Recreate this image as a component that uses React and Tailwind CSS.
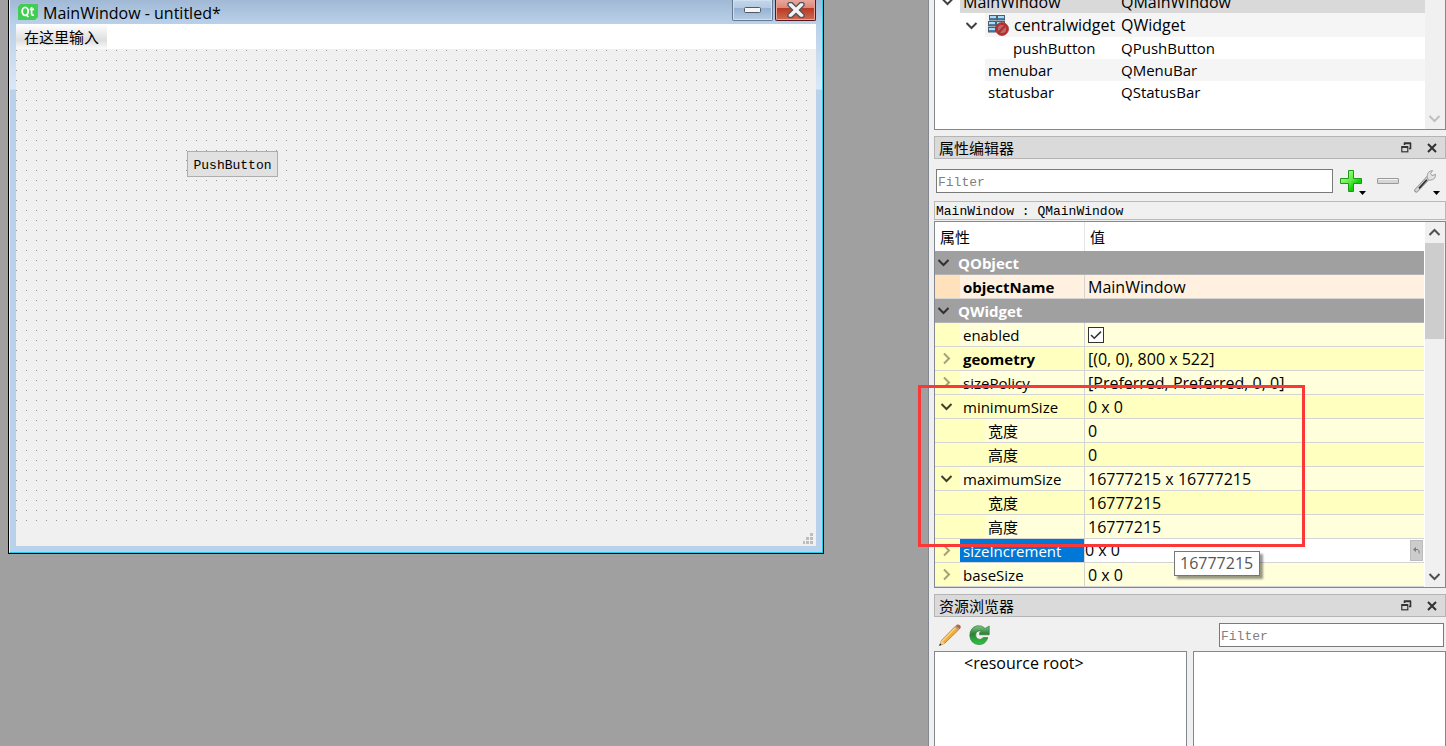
import React from 'react';

function Chevron({ dir = 'down', className = 'text-[#404040]', size = 13 }) {
  const d = {
    down: 'M1.5 4 L6.5 9 L11.5 4',
    up: 'M1.5 9 L6.5 4 L11.5 9',
    right: 'M4 1.5 L9 6.5 L4 11.5',
  }[dir];
  return (
    <svg width={size} height={size} viewBox="0 0 13 13" className={className} aria-hidden="true">
      <path d={d} fill="none" stroke="currentColor" strokeWidth="2" />
    </svg>
  );
}

function QtLogo() {
  return (
    <svg width="20" height="16" viewBox="0 0 20 16" aria-hidden="true">
      <path d="M2.5 0H20V13L17 16H0V2.5Z" fill="#41cd52" />
      <ellipse cx="7.2" cy="7.3" rx="3" ry="4" fill="none" stroke="#fff" strokeWidth="1.8" />
      <path d="M8 10.5L10.3 13" stroke="#fff" strokeWidth="1.8" />
      <path d="M13.6 3V9.8Q13.6 11.4 16 11M11.8 5.4H16" fill="none" stroke="#fff" strokeWidth="1.7" />
    </svg>
  );
}

function NoLayoutIcon() {
  return (
    <svg width="21" height="21" viewBox="0 0 21 21" aria-hidden="true">
      <g fill="#4f7fa6" stroke="#4d6072" strokeWidth="1">
        <rect x="1.5" y="0.5" width="7" height="4.5" />
        <rect x="9.5" y="0.5" width="7" height="4.5" />
        <rect x="0.5" y="6.5" width="7" height="4.5" />
        <rect x="8.5" y="6.5" width="8" height="4.5" />
        <rect x="0.5" y="12.5" width="7" height="4.5" />
      </g>
      <path d="M2 2H8M10 2H16M1 8H7M9 8H16M1 14H7" stroke="#a9dcf6" strokeWidth="2" />
      <circle cx="14" cy="14" r="5.3" fill="#a77474" stroke="#c02c2c" strokeWidth="2.4" />
      <path d="M10.4 17.6L17.6 10.4" stroke="#c42a2a" strokeWidth="2.4" />
      <circle cx="14" cy="14" r="6.5" fill="none" stroke="#8f3030" strokeWidth="0.7" />
    </svg>
  );
}

function PlusIcon() {
  return (
    <svg width="28" height="26" viewBox="0 0 28 26" aria-hidden="true">
      <defs>
        <linearGradient id="plusFill" x1="0" y1="0" x2="1" y2="1">
          <stop offset="0" stopColor="#d4fcc4" />
          <stop offset="0.5" stopColor="#5aea42" />
          <stop offset="0.7" stopColor="#12d008" />
          <stop offset="1" stopColor="#12c408" />
        </linearGradient>
      </defs>
      <path d="M8.5 0.5H13.5V8.5H21.5V13.5H13.5V21.5H8.5V13.5H0.5V8.5H8.5Z" fill="url(#plusFill)" stroke="#1c9a14" />
      <path d="M19 21H26L22.5 25Z" fill="#000" />
    </svg>
  );
}

function MinusIcon() {
  return (
    <svg width="22" height="6" viewBox="0 0 22 6" aria-hidden="true">
      <rect x="0.5" y="0.5" width="21" height="5" rx="0.5" fill="#d6d6d6" stroke="#999" />
      <path d="M1.5 1.5H20.5" stroke="#f4f4f4" />
    </svg>
  );
}

function WrenchIcon() {
  return (
    <svg width="28" height="26" viewBox="0 0 28 26" aria-hidden="true">
      <path d="M2.4 20.4L14 8" stroke="#8a8a8a" strokeWidth="4.2" strokeLinecap="round" />
      <path d="M2.5 20.2L14 8" stroke="#d2d2d2" strokeWidth="2.8" strokeLinecap="round" />
      <path d="M5 18.4L12.8 9.8" stroke="#303030" strokeWidth="1.7" />
      <path
        d="M13.2 6.8Q13 1 18.6 0.6L16.6 3.4L18 5.6L21.4 4.4Q22 9.8 16 10.2L14 9.6Z"
        fill="#e2e2e2"
        stroke="#979797"
        strokeWidth="0.9"
      />
      <path d="M19 21H26L22.5 25Z" fill="#000" />
    </svg>
  );
}

function PencilIcon() {
  return (
    <svg width="22" height="22" viewBox="0 0 22 22" aria-hidden="true">
      <path d="M0.5 21.5L2.6 16.3L16 2.6L19.6 5.8L5.6 19.4Z" fill="#f0ac3c" stroke="#b9781c" strokeWidth="0.8" />
      <path d="M3.4 17L16.6 3.6" stroke="#fbd98a" strokeWidth="1.3" />
      <path d="M0.5 21.5L2.6 16.3L5.6 19.4Z" fill="#ecd0a0" />
      <path d="M0.2 21.8L1.2 19.4L2.6 20.8Z" fill="#222" />
      <path d="M15.6 3L17 1.6L20.8 5L19.4 6.2Z" fill="#a9a49c" />
      <path d="M16.8 1.8Q18.6 -0.6 20.9 1.2Q22.8 3 20.6 5.2Z" fill="#c0603c" />
    </svg>
  );
}

function ReloadIcon() {
  return (
    <svg width="21" height="20" viewBox="0 0 21 20" aria-hidden="true">
      <defs>
        <linearGradient id="reloadFill" gradientUnits="userSpaceOnUse" x1="0" y1="0" x2="0" y2="20">
          <stop offset="0" stopColor="#8cc88c" />
          <stop offset="0.45" stopColor="#2b8238" />
          <stop offset="1" stopColor="#2ecb3c" />
        </linearGradient>
      </defs>
      <path
        d="M16.2 3.4L20.2 1V9.8H10.6V7.6L12.6 6.4Q8.6 5 7 8Q5.8 11.6 8.4 13.8Q11.6 15.6 14.4 12.6H18.8Q17 19.4 10 19.6Q1.6 19 0.8 10.8Q1 2.4 8 0.8Q13 0 16.2 3.4Z"
        fill="url(#reloadFill)"
        stroke="#2d7c38"
        strokeWidth="0.7"
      />
    </svg>
  );
}

function DockTitle({ children }) {
  return (
    <div className="flex h-[23px] shrink-0 items-center border border-[#b4b4b4] bg-[#dadada] pl-1">
      <h2 className="flex-1 text-[15px] leading-5">{children}</h2>
      <button aria-label="Float" className="mr-[15px] block">
        <svg width="11" height="11" viewBox="0 0 11 11" aria-hidden="true">
          <path d="M3.5 3V1.5H9.5V6.5H8M3 1H10" fill="none" stroke="#333" strokeWidth="1.6" />
          <rect x="0.8" y="4.8" width="6" height="5" fill="#dadada" stroke="#333" strokeWidth="1.2" />
          <path d="M0.5 5H7" stroke="#333" strokeWidth="2" />
        </svg>
      </button>
      <button aria-label="Close" className="mr-2 block">
        <svg width="10" height="10" viewBox="0 0 10 10" aria-hidden="true">
          <path d="M1 1L9 9M9 1L1 9" stroke="#303030" strokeWidth="2" />
        </svg>
      </button>
    </div>
  );
}

function FormWindow() {
  return (
    <section className="h-[554px] w-[816px] shrink-0 border-r border-b border-l border-black">
      <div className="flex h-full flex-col border-r border-b border-l border-r-[#22cfe8] border-b-[#22cfe8] border-l-[#e8f2fb] bg-[linear-gradient(#a1b9d4_0px,#b9d1ea_24px,#dbe7f6_89px,#b9d1ea_90px)] pr-1.5 pb-1.5 pl-1.5">
        <header className="flex h-6 shrink-0 items-start pl-0.5">
          <span className="mt-1">
            <QtLogo />
          </span>
          <h1 className="mt-0.5 ml-[5px] flex-1 text-base leading-[22px]">MainWindow - untitled*</h1>
          <button
            aria-label="Minimize"
            className="mr-0.5 flex h-[21px] w-[41px] items-center justify-center rounded-b-xs border border-t-0 border-[#66788d] bg-[linear-gradient(#c3d6eb_0%,#b4cbe3_38%,#96b1cf_42%,#b5cde6_100%)] shadow-[inset_0_0_0_1px_#cfe0f2]"
          >
            <svg width="17" height="6" viewBox="0 0 17 6" aria-hidden="true">
              <rect x="0.5" y="0.5" width="16" height="5" rx="1" fill="#f5f5f5" stroke="#4f5a68" />
            </svg>
          </button>
          <button
            aria-label="Close"
            className="flex h-[21px] w-[41px] items-center justify-center rounded-b-xs border border-t-0 border-[#551820] bg-[linear-gradient(#e9a89c_0%,#dd8878_38%,#b93a22_42%,#cf6a50_100%)] shadow-[inset_0_0_0_1px_#e8a498]"
          >
            <svg width="18" height="16" viewBox="0 0 18 16" aria-hidden="true">
              <path
                d="M1 1.5L2 0.7H5L9 4.6L13 0.7H16L17 1.5V3.5L12.4 8L17 12.5V14.5L16 15.3H13L9 11.4L5 15.3H2L1 14.5V12.5L5.6 8L1 3.5Z"
                fill="#f4f4f4"
                stroke="#50525f"
                strokeWidth="1.3"
              />
            </svg>
          </button>
        </header>
        <nav className="flex h-[25px] shrink-0 bg-white">
          <button className="bg-[linear-gradient(#ffffff,#dedede_65%,#fafafa)] px-2 text-[15px] leading-[26px]">在这里输入</button>
        </nav>
        <div className="flex flex-1 flex-col bg-[#f0f0f0]">
          <div className="h-[476px] bg-[linear-gradient(#f0f0f0_1px,transparent_1px,transparent_2px,#f0f0f0_2px),linear-gradient(90deg,#959595_1px,transparent_1px)] bg-size-[10px_10px] pt-[102px] pl-[171px]">
            <button className="block h-[26px] w-[91px] border border-[#adadad] bg-[#e1e1e1] font-['Liberation_Mono',monospace] text-[13px] leading-[27px]">
              PushButton
            </button>
          </div>
          <footer className="flex flex-1 items-end justify-end pr-[3px] pb-0.5">
            <svg width="10" height="11" viewBox="0 0 10 11" aria-hidden="true">
              <path d="M7 0h3v3h-3zM3 4h3v3h-3zM7 4h3v3h-3zM0 8h2v3h-2zM3 8h3v3h-3zM7 8h3v3h-3z" fill="#bdbdbd" />
            </svg>
          </footer>
        </div>
      </div>
    </section>
  );
}

function ObjectTree() {
  return (
    <section className="flex h-[130px] shrink-0 border-r border-b border-l border-[#828790] bg-white">
      <div className="flex-1">
        <div className="flex h-[13px] items-end overflow-hidden">
          <span className="flex h-6 w-[25px] shrink-0 items-center justify-center">
            <Chevron />
          </span>
          <div className="flex h-6 flex-1 bg-[#d9d9d9] text-base">
            <span className="w-[161px] pl-[3px] leading-[26px]">MainWindow</span>
            <span className="leading-[26px]">QMainWindow</span>
          </div>
        </div>
        <div className="flex h-6 text-base">
          <span className="flex w-[50px] shrink-0 items-center justify-end pr-[7px]">
            <Chevron />
          </span>
          <div className="flex flex-1 bg-[#f5f5f5]">
            <span className="flex w-[136px] items-center gap-[5px] pl-[3px]">
              <NoLayoutIcon />
              <span>centralwidget</span>
            </span>
            <span className="leading-6">QWidget</span>
          </div>
        </div>
        <div className="flex h-[22px]">
          <span className="w-[186px] pl-[78px] leading-[22px]">pushButton</span>
          <span className="leading-[22px]">QPushButton</span>
        </div>
        <div className="flex h-[22px] pl-[50px]">
          <div className="flex flex-1 bg-[#f5f5f5]">
            <span className="w-[136px] pl-[3px] leading-[22px]">menubar</span>
            <span className="leading-[22px]">QMenuBar</span>
          </div>
        </div>
        <div className="flex h-[22px]">
          <span className="w-[186px] pl-[53px] leading-[22px]">statusbar</span>
          <span className="leading-[22px]">QStatusBar</span>
        </div>
      </div>
      <div className="flex w-5 shrink-0 items-end bg-[#f0f0f0] pb-1 pl-[3px]">
        <Chevron className="text-[#bfbfbf]" />
      </div>
    </section>
  );
}

const rows = [
  { name: 'QObject', group: true },
  { name: 'objectName', value: 'MainWindow', bold: true, tone: 'peach' },
  { name: 'QWidget', group: true },
  { name: 'enabled', check: true, tone: 'light' },
  { name: 'geometry', value: '[(0, 0), 800 x 522]', bold: true, arrow: 'right', tone: 'dark' },
  { name: 'sizePolicy', value: '[Preferred, Preferred, 0, 0]', arrow: 'right', tone: 'light' },
  { name: 'minimumSize', value: '0 x 0', arrow: 'down', tone: 'dark' },
  { name: '宽度', value: '0', child: true, tone: 'light' },
  { name: '高度', value: '0', child: true, tone: 'dark' },
  { name: 'maximumSize', value: '16777215 x 16777215', arrow: 'down', tone: 'light' },
  { name: '宽度', value: '16777215', child: true, tone: 'dark' },
  { name: '高度', value: '16777215', child: true, tone: 'light' },
  { name: 'sizeIncrement', value: '0 x 0', arrow: 'right', selected: true, tone: 'white' },
  { name: 'baseSize', value: '0 x 0', arrow: 'right', tone: 'light' },
];

const tones = {
  peach: 'bg-[#fff0df]',
  light: 'bg-[#ffffdc]',
  dark: 'bg-[#ffffbf]',
  white: 'bg-white',
};

function PropertyRow({ row }) {
  if (row.group) {
    return (
      <tr className="h-6 bg-[#a0a0a0] text-white">
        <th colSpan={3} className="border-b border-[#b4b4b4] p-0 text-left font-bold">
          <div className="flex h-[23px] items-start">
            <span className="w-[23px] pt-[5px] pl-0.5">
              <Chevron className="text-[#303030]" />
            </span>
            <span className="leading-[25px]">{row.name}</span>
          </div>
        </th>
      </tr>
    );
  }
  const indent = row.tone === 'peach' ? 'bg-[#ffe1bc]' : 'bg-[#ffffbf]';
  return (
    <tr className={`h-6 ${tones[row.tone]}`}>
      <td className={`border-b border-[#d4d4d4] p-0 ${indent}`}>
        {row.arrow && (
          <div className="pl-[5px]">
            <Chevron dir={row.arrow} className={row.arrow === 'right' ? 'text-[#a2a27a]' : 'text-[#404030]'} />
          </div>
        )}
      </td>
      <td className="border-r border-b border-[#d4d4d4] p-0">
        <div
          className={
            row.selected
              ? 'h-[23px] bg-[#0078d7] pl-[3px] leading-[25px] text-white'
              : row.bold
                ? 'h-[23px] pl-[3px] leading-[25px] font-bold'
                : row.child
                  ? 'flex h-[23px] leading-[25px]'
                  : 'h-[23px] pl-[3px] leading-[25px]'
          }
        >
          {row.child && <span className="mr-[3px] w-[25px] bg-[#ffffbf]" />}
          {row.name}
        </div>
      </td>
      <td className="border-b border-[#d4d4d4] p-0 text-base">
        {row.check ? (
          <label className="relative flex h-[23px] items-center pl-[3px]">
            <input
              type="checkbox"
              defaultChecked
              aria-label="enabled"
              className="peer h-4 w-4 appearance-none border border-[#333] bg-white"
            />
            <svg
              width="16"
              height="16"
              viewBox="0 0 16 16"
              aria-hidden="true"
              className="pointer-events-none absolute left-[3px] hidden peer-checked:block"
            >
              <path d="M3 8L6.3 11.3L13 4.6" fill="none" stroke="#333" strokeWidth="1.5" />
            </svg>
          </label>
        ) : row.selected ? (
          <div className="flex h-[23px] items-center justify-between">
            <span className="leading-[23px]">{row.value}</span>
            <button
              aria-label="Reset"
              className="mr-px flex h-[21px] w-[13px] items-center justify-center border border-[#bcbcbc] bg-[#cccccc]"
            >
              <svg width="7" height="7" viewBox="0 0 7 7" aria-hidden="true">
                <path d="M3 0V5L0 2.5Z" fill="#7c7c7c" />
                <path d="M2.5 2.5H5Q6.2 3 6.2 6.5" fill="none" stroke="#7c7c7c" />
              </svg>
            </button>
          </div>
        ) : (
          <div className="h-[23px] pl-[3px] leading-[25px]">{row.value}</div>
        )}
      </td>
    </tr>
  );
}

function PropertyEditor() {
  return (
    <>
      <div className="mt-1.5">
        <DockTitle>属性编辑器</DockTitle>
      </div>
      <div className="flex h-[42px] shrink-0 items-center pt-0.5 pl-0.5">
        <input
          aria-label="Filter properties"
          placeholder="Filter"
          className="h-6 min-w-0 flex-1 border border-[#7a7a7a] bg-white pt-0.5 pl-px font-['Liberation_Mono',monospace] text-[13px] placeholder:text-[#808080]"
        />
        <button aria-label="Add property" className="ml-[7px] block pt-1">
          <PlusIcon />
        </button>
        <button aria-label="Remove property" className="ml-[9px] block">
          <MinusIcon />
        </button>
        <button aria-label="Configure" className="mr-1 ml-[15px] block pt-1">
          <WrenchIcon />
        </button>
      </div>
      <p className="h-[19px] shrink-0 border border-[#b9b9b9] pl-px font-['Liberation_Mono',monospace] text-[13px] leading-5">
        MainWindow : QMainWindow
      </p>
      <div className="relative mt-px flex h-[367px] shrink-0 border border-[#828790] bg-white">
        <div className="flex-1">
          <table className="w-full table-fixed border-separate border-spacing-0">
            <colgroup>
              <col className="w-[25px]" />
              <col className="w-[125px]" />
              <col />
            </colgroup>
            <thead>
              <tr className="h-[29px]">
                <th colSpan={2} className="border-r border-[#e5e5e5] p-0 text-left font-normal">
                  <div className="h-[29px] pl-[5px] leading-[31px]">属性</div>
                </th>
                <th className="p-0 text-left font-normal">
                  <div className="h-[29px] pl-[5px] leading-[31px]">值</div>
                </th>
              </tr>
            </thead>
            <tbody>
              {rows.map((row, i) => (
                <PropertyRow key={i} row={row} />
              ))}
            </tbody>
          </table>
        </div>
        <div className="ml-px flex w-5 shrink-0 flex-col bg-[#f0f0f0]">
          <span className="flex h-[21px] items-center pl-[3px]">
            <Chevron dir="up" className="text-[#505050]" />
          </span>
          <span className="h-24 w-[19px] bg-[#cdcdcd]" />
          <span className="mt-auto flex h-[21px] items-center pl-[3px]">
            <Chevron className="text-[#505050]" />
          </span>
        </div>
        <div className="pointer-events-none absolute top-[163px] -left-[17px] h-[162px] w-[387px] border-3 border-[#fb3838]" />
        <div
          role="tooltip"
          className="absolute top-[329px] left-[239px] h-[25px] w-[86px] border border-[#767676] bg-white pl-[5px] text-base leading-[23px] text-[#575757] shadow-[3px_3px_2px_rgba(0,0,0,0.4)]"
        >
          16777215
        </div>
      </div>
    </>
  );
}

function ResourceBrowser() {
  return (
    <>
      <div className="mt-1.5">
        <DockTitle>资源浏览器</DockTitle>
      </div>
      <div className="flex h-[34px] shrink-0 items-center gap-2 pr-0.5 pl-[5px]">
        <button aria-label="Edit resources" className="block pt-0.5">
          <PencilIcon />
        </button>
        <button aria-label="Reload" className="block pt-0.5">
          <ReloadIcon />
        </button>
        <input
          aria-label="Filter resources"
          placeholder="Filter"
          className="mt-1.5 ml-auto h-6 w-[225px] self-start border border-[#7a7a7a] bg-white pt-0.5 pl-px font-['Liberation_Mono',monospace] text-[13px] placeholder:text-[#808080]"
        />
      </div>
      <div className="grid flex-1 grid-cols-2 gap-1.5">
        <div className="border border-b-0 border-[#828790] bg-white pl-[29px] text-base leading-[23px]">&lt;resource root&gt;</div>
        <div className="border border-b-0 border-[#828790] bg-white" />
      </div>
    </>
  );
}

export default function App() {
  return (
    <div className="flex h-screen overflow-hidden bg-[#a0a0a0] font-['Open_Sans','Noto_Sans_CJK_SC',sans-serif] text-[15px] text-black">
      <main className="min-w-0 flex-1 pl-2">
        <FormWindow />
      </main>
      <aside className="flex w-[518px] shrink-0 flex-col border-l border-[#828790] bg-[#f0f0f0] pl-[5px]">
        <ObjectTree />
        <PropertyEditor />
        <ResourceBrowser />
      </aside>
    </div>
  );
}
